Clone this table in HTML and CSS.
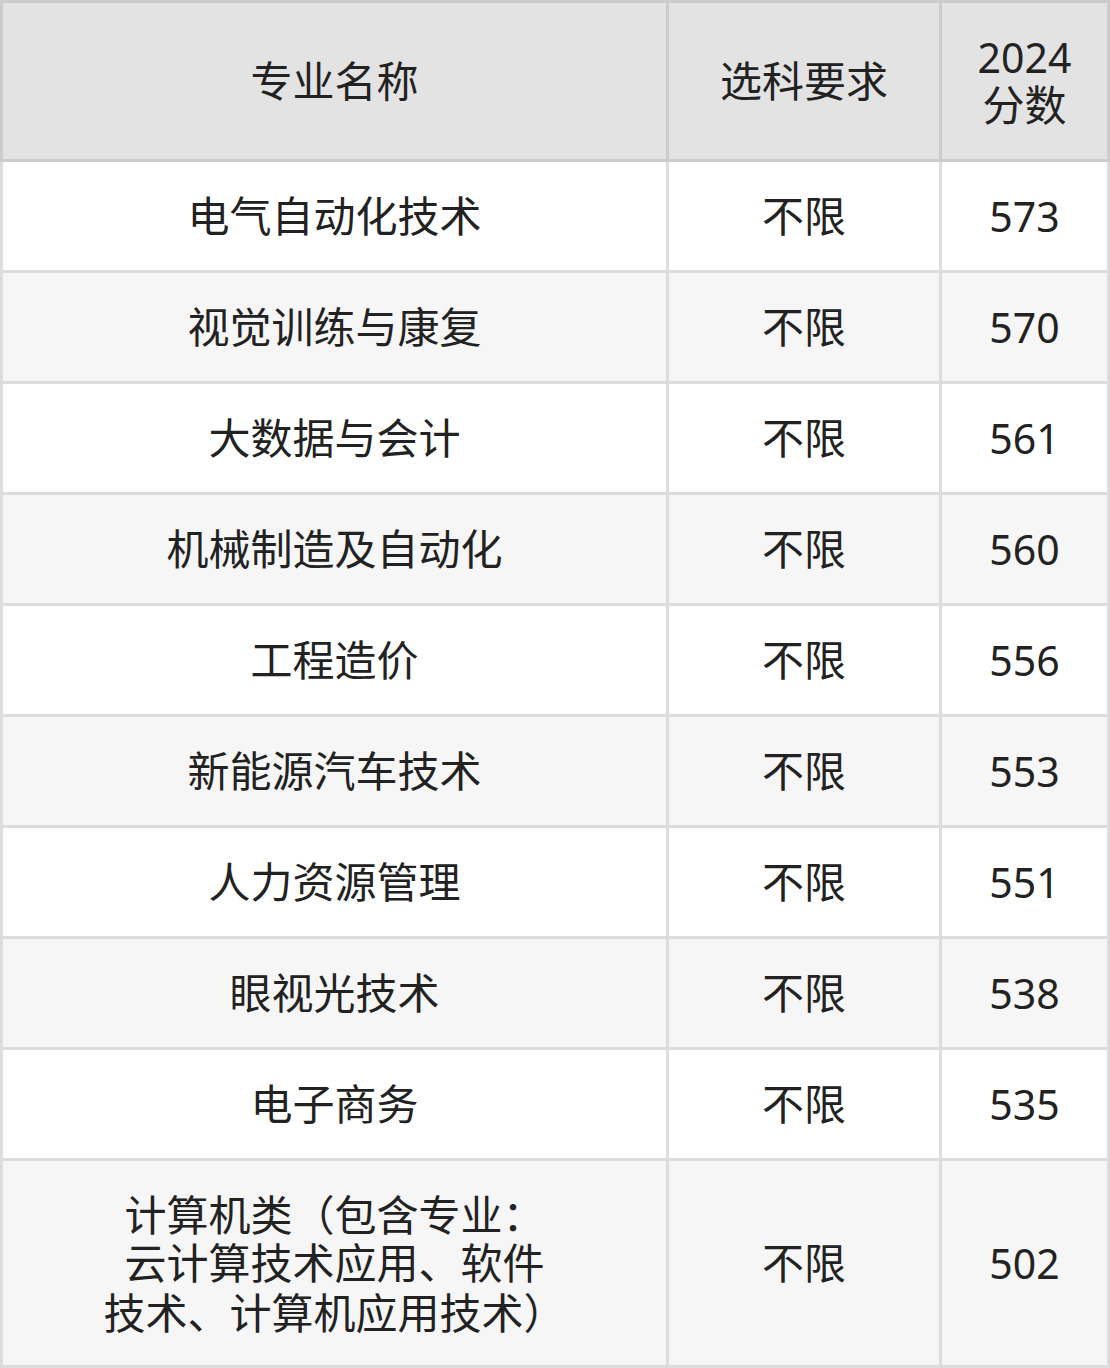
FILE: index.html
```html
<!DOCTYPE html>
<html lang="zh-CN">
<head>
<meta charset="utf-8">
<title>专业分数</title>
<link rel="stylesheet" href="styles.css">
</head>
<body>
<div class="table">
  <div class="cell head">专业名称</div>
  <div class="cell head">选科要求</div>
  <div class="cell head num"><div class="lines">2024<br><span class="cjk">分数</span></div></div>

  <div class="cell">电气自动化技术</div><div class="cell">不限</div><div class="cell num">573</div>
  <div class="cell alt">视觉训练与康复</div><div class="cell alt">不限</div><div class="cell alt num">570</div>
  <div class="cell">大数据与会计</div><div class="cell">不限</div><div class="cell num">561</div>
  <div class="cell alt">机械制造及自动化</div><div class="cell alt">不限</div><div class="cell alt num">560</div>
  <div class="cell">工程造价</div><div class="cell">不限</div><div class="cell num">556</div>
  <div class="cell alt">新能源汽车技术</div><div class="cell alt">不限</div><div class="cell alt num">553</div>
  <div class="cell">人力资源管理</div><div class="cell">不限</div><div class="cell num">551</div>
  <div class="cell alt">眼视光技术</div><div class="cell alt">不限</div><div class="cell alt num">538</div>
  <div class="cell">电子商务</div><div class="cell">不限</div><div class="cell num">535</div>
  <div class="cell alt"><div class="lines">计算机类<span class="punct">（</span>包含专业：<br>云计算技术应用、软件<br>技术、计算机应用技术<span class="punct">）</span></div></div><div class="cell alt">不限</div><div class="cell alt num">502</div>
</div>
</body>
</html>
```

FILE: styles.css
```css
html, body {
  margin: 0;
  padding: 0;
  background: #ffffff;
}

.table {
  width: 1110px;
  box-sizing: border-box;
  display: grid;
  grid-template-columns: 663px 270px 165px;
  grid-template-rows: 156px repeat(9, 108px) 204px;
  gap: 3px;
  padding: 3px;
  background: #dddddd;
  font-family: "Noto Sans", "Noto Sans CJK SC", sans-serif;
  font-size: 42px;
  line-height: 48px;
  color: #222222;
  text-spacing-trim: space-all;
}

.cell {
  display: flex;
  align-items: center;
  justify-content: center;
  text-align: center;
  background: #ffffff;
}

.lines {
  white-space: nowrap;
}

.cell.num {
  font-size: 41px;
}

.cell.num .cjk {
  font-size: 42px;
}

.punct {
  font-family: "Noto Sans CJK KR", "Noto Sans CJK SC", sans-serif;
}

.cell.alt {
  background: #f6f6f6;
}

.cell.head {
  background: #e3e3e3;
  box-shadow: 0 0 0 3px #cccccc;
}
```
